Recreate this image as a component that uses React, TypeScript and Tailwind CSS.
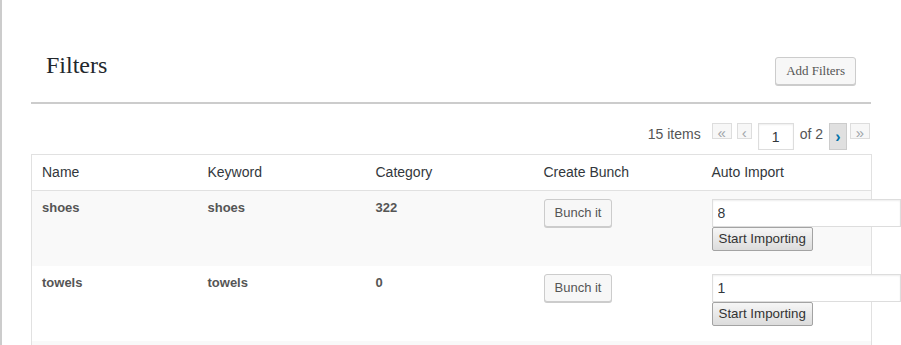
import React from 'react';

interface FilterRow {
  name: string;
  keyword: string;
  category: string;
  autoImport: string;
}

const rows: FilterRow[] = [
  { name: 'shoes', keyword: 'shoes', category: '322', autoImport: '8' },
  { name: 'towels', keyword: 'towels', category: '0', autoImport: '1' },
];

const cols = ['Name', 'Keyword', 'Category', 'Create Bunch', 'Auto Import'];

export default function App() {
  return (
    <div className="min-h-screen overflow-hidden border-l-2 border-[#cccccc] bg-white font-['Liberation_Sans',Arial,sans-serif]">
      <div className="ml-[29px] w-[840px]">
        {/* Title bar */}
        <div className="flex h-[104px] items-start justify-between border-b-2 border-[#cccccc] px-[15px] pt-[53px]">
          <h2 className="font-['Liberation_Serif','Times_New_Roman',serif] text-[24px] leading-6 text-[#23282d]">
            Filters
          </h2>
          <button className="mt-[4px] h-[28px] rounded-[3px] border border-[#cccccc] bg-[#f7f7f7] px-[10px] font-['Liberation_Serif','Times_New_Roman',serif] text-[13px] leading-[26px] text-[#555555] shadow-[0_1px_0_#cccccc]">
            Add Filters
          </button>
        </div>

        {/* Pagination */}
        <div className="mb-[4px] mt-[19px] flex items-start justify-end pr-[1px] text-[14px] text-[#555555]">
          <span className="mr-[11px] mt-[3px] leading-4">15 items</span>
          <span className="mr-[5px] flex h-[16px] w-[20px] items-center justify-center border border-[#dddddd] bg-[#f7f7f7] pt-[3px] text-[15px] leading-none text-[#a0a5aa]">
            «
          </span>
          <span className="mr-[6px] flex h-[16px] w-[15px] items-center justify-center border border-[#dddddd] bg-[#f7f7f7] pt-[3px] text-[15px] leading-none text-[#a0a5aa]">
            ‹
          </span>
          <input
            readOnly
            value="1"
            className="mr-[6px] h-[27px] w-[36px] border border-[#dddddd] bg-white text-center text-[14px] text-[#32373c] shadow-[inset_0_1px_2px_rgba(0,0,0,0.07)] outline-none"
          />
          <span className="mr-[6px] mt-[3px] leading-4">of 2</span>
          <span className="mr-[3px] flex h-[27px] w-[18px] items-center justify-center border border-[#cccccc] bg-[#e0e0e0] pt-[1px] text-[16px] font-bold leading-none text-[#0073aa]">
            ›
          </span>
          <span className="flex h-[16px] w-[20px] items-center justify-center border border-[#dddddd] bg-[#f7f7f7] pt-[3px] text-[15px] leading-none text-[#a0a5aa]">
            »
          </span>
        </div>

        {/* Table */}
        <table className="w-[840px] table-fixed border-collapse border border-[#e1e1e1]">
          <colgroup>
            <col className="w-[166px]" />
            <col className="w-[168px]" />
            <col className="w-[168px]" />
            <col className="w-[168px]" />
            <col className="w-[170px]" />
          </colgroup>
          <thead>
            <tr>
              {cols.map(c => (
                <th
                  key={c}
                  className="h-[36px] border-b border-[#e1e1e1] px-[10px] text-left text-[14px] font-normal text-[#32373c]"
                >
                  {c}
                </th>
              ))}
            </tr>
          </thead>
          <tbody>
            {rows.map((r, i) => (
              <tr key={r.name} className={i % 2 === 0 ? 'bg-[#f9f9f9]' : 'bg-white'}>
                <td className="h-[75px] px-[10px] pt-[8px] align-top text-[13px] font-bold leading-[18px] text-[#555555]">
                  {r.name}
                </td>
                <td className="px-[10px] pt-[8px] align-top text-[13px] font-bold leading-[18px] text-[#555555]">
                  {r.keyword}
                </td>
                <td className="px-[10px] pt-[8px] align-top text-[13px] font-bold leading-[18px] text-[#555555]">
                  {r.category}
                </td>
                <td className="px-[10px] pt-[8px] align-top">
                  <button className="h-[28px] rounded-[3px] border border-[#cccccc] bg-[#f7f7f7] px-[10px] text-[13px] leading-[26px] text-[#555555] shadow-[0_1px_0_#cccccc]">
                    Bunch it
                  </button>
                </td>
                <td className="px-[10px] pt-[8px] align-top">
                  <div className="flex flex-col items-start">
                    <input
                      readOnly
                      value={r.autoImport}
                      className="h-[28px] w-[189px] border border-[#dddddd] bg-white px-[5px] text-[14px] text-[#32373c] shadow-[inset_0_1px_2px_rgba(0,0,0,0.07)] outline-none"
                    />
                    <button className="h-[24px] rounded-[2px] border border-[#a3a3a3] bg-gradient-to-b from-[#f6f6f6] to-[#dcdcdc] px-[6px] text-[13.33px] text-[#333333]">
                      Start Importing
                    </button>
                  </div>
                </td>
              </tr>
            ))}
            {/* next striped row, below the fold */}
            <tr className="bg-[#f9f9f9]">
              <td colSpan={5} className="h-[75px]" />
            </tr>
          </tbody>
        </table>
      </div>
    </div>
  );
}
